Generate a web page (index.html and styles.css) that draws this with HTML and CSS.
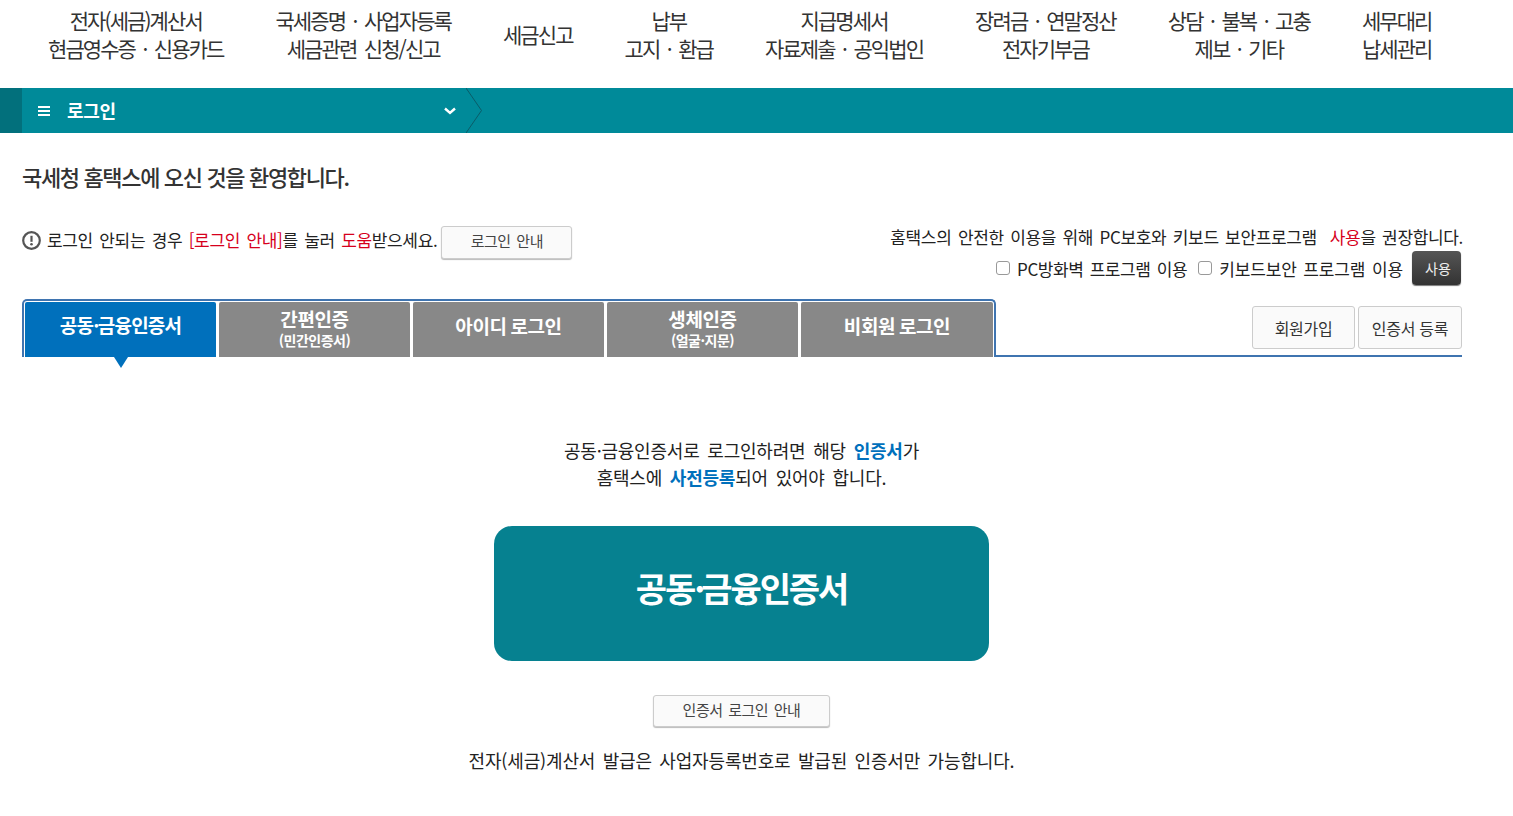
FILE: index.html
```html
<!DOCTYPE html>
<html lang="ko">
<head>
<meta charset="utf-8">
<title>홈택스 로그인</title>
<link rel="stylesheet" href="styles.css">
</head>
<body>
<nav class="gnb">
  <a class="gnb-item">전자(세금)계산서<br>현금영수증 · 신용카드</a>
  <a class="gnb-item">국세증명 · 사업자등록<br>세금관련 신청/신고</a>
  <a class="gnb-item">세금신고</a>
  <a class="gnb-item">납부<br>고지 · 환급</a>
  <a class="gnb-item">지급명세서<br>자료제출 · 공익법인</a>
  <a class="gnb-item">장려금 · 연말정산<br>전자기부금</a>
  <a class="gnb-item">상담 · 불복 · 고충<br>제보 · 기타</a>
  <a class="gnb-item">세무대리<br>납세관리</a>
</nav>
<div class="crumb">
  <div class="crumb-strip"></div>
  <div class="crumb-cell">
    <svg class="crumb-menu" width="12" height="12" viewBox="0 0 12 12"><path d="M0 2h12M0 6h12M0 10h12" stroke="#fff" stroke-width="2"/></svg>
    <span class="crumb-title">로그인</span>
    <svg class="crumb-down" width="12" height="8" viewBox="0 0 12 8"><path d="M1 1.500l5 4.500 5-4.500" fill="none" stroke="#fff" stroke-width="2.400"/></svg>
  </div>
  <svg class="crumb-arrow" width="17" height="45" viewBox="0 0 17 45"><path d="M0 0l15.500 22.500L0 45" fill="none" stroke="#0a5c68" stroke-width="1"/></svg>
</div>
<main class="page">
  <h1 class="welcome">국세청 홈택스에 오신 것을 환영합니다.</h1>
  <section class="notice">
    <div class="notice-left">
      <svg class="info" width="19" height="19" viewBox="0 0 19 19"><circle cx="9.500" cy="9.500" r="8.300" fill="none" stroke="#555" stroke-width="2.200"/><path d="M9.500 4.800v6" stroke="#555" stroke-width="2.200"/><circle cx="9.500" cy="13.300" r="1.300" fill="#555"/></svg>
      <span class="notice-text notice-help">로그인 안되는 경우 <em>[로그인 안내]</em>를 눌러 <em>도움</em>받으세요.</span>
      <button class="btn btn-guide">로그인 안내</button>
    </div>
    <div class="notice-right">
      <p class="notice-text">홈택스의 안전한 이용을 위해 PC보호와 키보드 보안프로그램 &nbsp;<em>사용</em>을 권장합니다.</p>
      <div class="sec-row">
        <label class="check"><span class="box"></span>PC방화벽 프로그램 이용</label>
        <label class="check"><span class="box"></span>키보드보안 프로그램 이용</label>
        <button class="btn-use">사용</button>
      </div>
    </div>
  </section>
  <section class="tabbar">
    <div class="tabs">
      <div class="tab active"><span>공동<span class="dot">·</span>금융인증서</span></div>
      <div class="tab tab-two">간편인증<small>(민간인증서)</small></div>
      <div class="tab">아이디 로그인</div>
      <div class="tab tab-two">생체인증<small>(얼굴·지문)</small></div>
      <div class="tab">비회원 로그인</div>
    </div>
    <div class="tab-side">
      <button class="btn-side">회원가입</button>
      <button class="btn-side">인증서 등록</button>
    </div>
  </section>
  <section class="cert">
    <p class="cert-desc">공동·금융인증서로 로그인하려면 해당 <strong>인증서</strong>가<br>홈택스에 <strong>사전등록</strong>되어 있어야 합니다.</p>
    <button class="cert-main">공동<span class="dot">·</span>금융인증서</button>
    <button class="btn btn-cert">인증서 로그인 안내</button>
    <p class="cert-note">전자(세금)계산서 발급은 사업자등록번호로 발급된 인증서만 가능합니다.</p>
  </section>
</main>
</body>
</html>
```
FILE: styles.css
```css
* { box-sizing: border-box; }
html, body { margin: 0; padding: 0; }
body {
  background: #fff;
  color: #222;
  font-family: "Noto Sans CJK KR", "Noto Sans", sans-serif;
  overflow: hidden;
  height: 816px;
}
button { font-family: inherit; cursor: pointer; }
p, h1 { margin: 0; }

.gnb {
  height: 88px;
  display: flex;
  align-items: center;
  gap: 52px;
  padding: 0 0 20px 48px;
}
.gnb-item {
  font-size: 21px;
  line-height: 28px;
  letter-spacing: -1.920px;
  word-spacing: 3.500px;
  text-align: center;
  color: #333;
  white-space: nowrap;
}

.crumb {
  height: 45px;
  background: #008a99;
  display: flex;
  align-items: stretch;
}
.crumb-strip { width: 22px; background: #02707c; }
.crumb-cell {
  width: 444px;
  display: flex;
  align-items: center;
  padding: 0 10px 0 16px;
}
.crumb-title {
  color: #fff;
  font-size: 18px;
  font-weight: 700;
  letter-spacing: -0.300px;
  margin-left: 17px;
  padding-bottom: 2px;
}
.crumb-down { margin-left: auto; }

.page { padding: 0 51px 0 22px; }
.welcome {
  font-size: 22px;
  font-weight: 500;
  letter-spacing: -1.350px;
  line-height: 32px;
  color: #333;
  padding-top: 27px;
}

.notice {
  display: flex;
  justify-content: space-between;
  align-items: flex-start;
  margin: 32px -1px 0 0;
}
.notice-left { display: flex; align-items: center; margin-top: 2px; }
.info { margin-right: 6px; margin-bottom: 5px; }
.notice-text {
  font-size: 17px;
  line-height: 26px;
  letter-spacing: -0.340px;
  word-spacing: 2px;
  color: #222;
  white-space: nowrap;
}
.notice-help { margin-bottom: 5px; }
.notice-text em { font-style: normal; color: #d6001c; }
.btn {
  background: #fafafa;
  border: 1px solid #ccc;
  border-radius: 3px;
  box-shadow: 0 1px 1px #bbb;
  color: #444;
  font-size: 15px;
  letter-spacing: -0.500px;
  word-spacing: 2px;
  padding: 0 0 4px;
}
.btn-guide { width: 131px; height: 33px; margin-left: 4px; }
.notice-right { display: flex; flex-direction: column; align-items: flex-end; }
.sec-row { display: flex; align-items: center; margin-top: 1px; }
.check {
  display: flex;
  align-items: center;
  font-size: 17px;
  letter-spacing: -0.450px;
  word-spacing: 2px;
  margin-right: 11px;
  white-space: nowrap;
}
.check + .check { margin-right: 9px; letter-spacing: -0.130px; }
.box {
  width: 14px;
  height: 14px;
  border: 1.500px solid #999;
  border-radius: 3px;
  background: #fff;
  margin-right: 7px;
}
.btn-use {
  width: 49px;
  height: 34px;
  margin-right: 2px;
  border: 0;
  border-radius: 4px;
  background: linear-gradient(#555, #333);
  box-shadow: 0 1px 1px #777;
  color: #eee;
  font-size: 14px;
  padding: 0 0 0 3px;
}

.tabbar {
  display: flex;
  height: 58px;
  margin-top: 14px;
}
.tabs {
  display: flex;
  gap: 3px;
  width: 974px;
  flex: none;
  padding: 1px 1px 0 1px;
  border: 2px solid #3f74b0;
  border-width: 2px 2px 0 2px;
  border-radius: 5px 5px 0 0;
}
.tab {
  width: 191px;
  background: #888;
  color: #fff;
  font-size: 19px;
  font-weight: 700;
  letter-spacing: -0.400px;
  word-spacing: -1px;
  line-height: 23px;
  display: flex;
  flex-direction: column;
  align-items: center;
  justify-content: center;
  border-radius: 2px 2px 0 0;
  padding-bottom: 9px;
}
.tab-two { padding-bottom: 2px; }
.tab:last-child { flex: 1; }
.tab small { font-size: 14px; line-height: 20px; letter-spacing: -0.500px; font-weight: 700; }
.tab.active { background: #0070bc; position: relative; letter-spacing: -0.800px; padding-bottom: 10px; }
.tab.active::after {
  content: "";
  position: absolute;
  left: 89px;
  bottom: -11px;
  border: 7px solid transparent;
  border-top: 11px solid #0070bc;
  border-bottom: 0;
}
.dot { letter-spacing: -2.500px; margin-right: 1px; }
.tab-side {
  flex: 1;
  display: flex;
  justify-content: flex-end;
  gap: 3px;
  align-items: flex-start;
  padding-top: 7px;
  border-bottom: 2px solid #3f74b0;
}
.btn-side {
  height: 43px;
  width: 103px;
  background: #fafafa;
  border: 1px solid #ccc;
  border-radius: 3px;
  color: #333;
  font-size: 16px;
  letter-spacing: -0.300px;
  padding: 0;
}
.btn-side + .btn-side { width: 104px; }

.cert {
  width: 1439px;
  display: flex;
  flex-direction: column;
  align-items: center;
  padding-top: 80px;
}
.cert-desc {
  font-size: 18px;
  line-height: 27px;
  letter-spacing: -0.220px;
  word-spacing: 3px;
  text-align: center;
  color: #222;
}
.cert-desc strong { color: #0070bc; font-weight: 700; }
.cert-main {
  width: 495px;
  height: 135px;
  margin-top: 35px;
  padding: 0 0 12px;
  border: 0;
  border-radius: 18px;
  background: #068190;
  color: #fff;
  font-size: 34px;
  font-weight: 700;
  letter-spacing: -2.100px;
}
.cert-main .dot { letter-spacing: -5px; margin-right: 1px; }
.btn-cert { width: 177px; height: 32px; margin-top: 34px; }
.cert-note {
  font-size: 18px;
  line-height: 27px;
  letter-spacing: -0.150px;
  word-spacing: 2.500px;
  color: #222;
  margin-top: 20px;
}
```
